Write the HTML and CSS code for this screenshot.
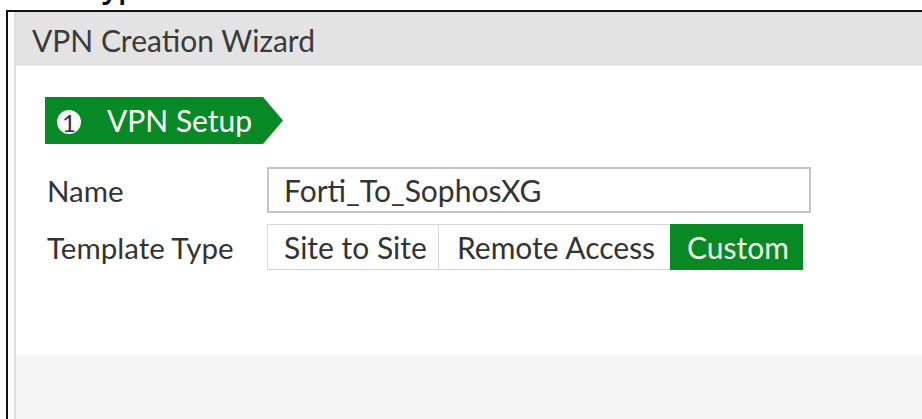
FILE: index.html
```html
<!DOCTYPE html>
<html>
<head>
<meta charset="utf-8">
<link rel="stylesheet" href="styles.css">
</head>
<body>
<div class="caption"><span class="caption-text">Type</span></div>
<div class="frame">
  <div class="dialog">
    <div class="dialog-header">VPN Creation Wizard</div>
    <div class="dialog-body">
      <div class="step">
        <span class="step-num">1</span>
        <span class="step-label">VPN Setup</span>
      </div>
      <div class="form-row">
        <label class="form-label">Name</label>
        <div class="text-input">Forti_To_SophosXG</div>
      </div>
      <div class="form-row">
        <label class="form-label">Template Type</label>
        <div class="segmented">
          <span class="seg">Site to Site</span>
          <span class="seg">Remote Access</span>
          <span class="seg seg-active">Custom</span>
        </div>
      </div>
    </div>
    <div class="dialog-footer"></div>
  </div>
</div>
</body>
</html>
```
FILE: styles.css
```css
html, body {
  margin: 0;
  padding: 0;
  background: #fff;
  height: 100%;
  overflow: hidden;
}

body {
  font-family: Lato, "Open Sans", sans-serif;
  color: #333;
}

/* partial line of the document text above the frame */
.caption {
  height: 10px;
  overflow: hidden;
  padding-left: 85px;
}
.caption-text {
  display: block;
  margin-top: -31px;
  font-family: "Open Sans", sans-serif;
  font-weight: 600;
  font-size: 30px;
  line-height: 36px;
  color: #000;
}

.frame {
  margin-left: 6px;
  border-top: 2px solid #111;
  border-left: 2px solid #111;
  padding-left: 6px;
  height: 420px;
}

.dialog {
  border-left: 2px solid #dcdcdc;
  height: 100%;
  display: flex;
  flex-direction: column;
}

.dialog-header {
  height: 53px;
  background: #e3e3e3;
  border-bottom: 1px solid #ececec;
  padding-left: 16px;
  font-size: 30px;
  line-height: 56px;
  color: #3a3a3a;
}

.dialog-body {
  height: 289px;
  padding: 31px 0 0 29px;
  box-sizing: border-box;
}

.dialog-footer {
  flex: 1;
  background: #f5f5f5;
}

/* step badge with arrow point */
.step {
  width: 238px;
  height: 47px;
  background: #078a25;
  clip-path: polygon(0 0, 218px 0, 100% 50%, 218px 100%, 0 100%);
  display: flex;
  align-items: center;
  padding-left: 12px;
  box-sizing: border-box;
  margin-bottom: 23px;
}
.step-num {
  width: 24px;
  height: 24px;
  margin-top: 2px;
  border-radius: 50%;
  background: #fff;
  color: #2e2e48;
  font-size: 24px;
  line-height: 25px;
  text-align: center;
  margin-right: 26px;
}
.step-label {
  color: #fff;
  font-size: 30px;
  line-height: 47px;
}

.form-row {
  display: flex;
  align-items: center;
  margin-bottom: 11px;
}
.form-label {
  width: 222px;
  padding-left: 2px;
  box-sizing: border-box;
  font-size: 29.5px;
  color: #333;
}

.text-input {
  width: 544px;
  height: 46px;
  box-sizing: border-box;
  border: 2px solid #c4c4c4;
  padding-left: 15px;
  font-size: 30px;
  line-height: 42px;
  color: #333;
}

.segmented {
  display: flex;
  height: 46px;
}
.seg {
  display: block;
  height: 46px;
  box-sizing: border-box;
  border: 1px solid #d6d6d6;
  border-right: none;
  font-size: 30px;
  line-height: 44px;
  padding: 0 0 0 16px;
  white-space: nowrap;
  overflow: hidden;
  color: #333;
}
.seg:nth-child(1) { width: 171px; }
.seg:nth-child(2) { width: 232px; padding-left: 18px; }
.seg-active {
  width: 133px;
  background: #078a25;
  border-color: #078a25;
  color: #f4f8e8;
}
```
